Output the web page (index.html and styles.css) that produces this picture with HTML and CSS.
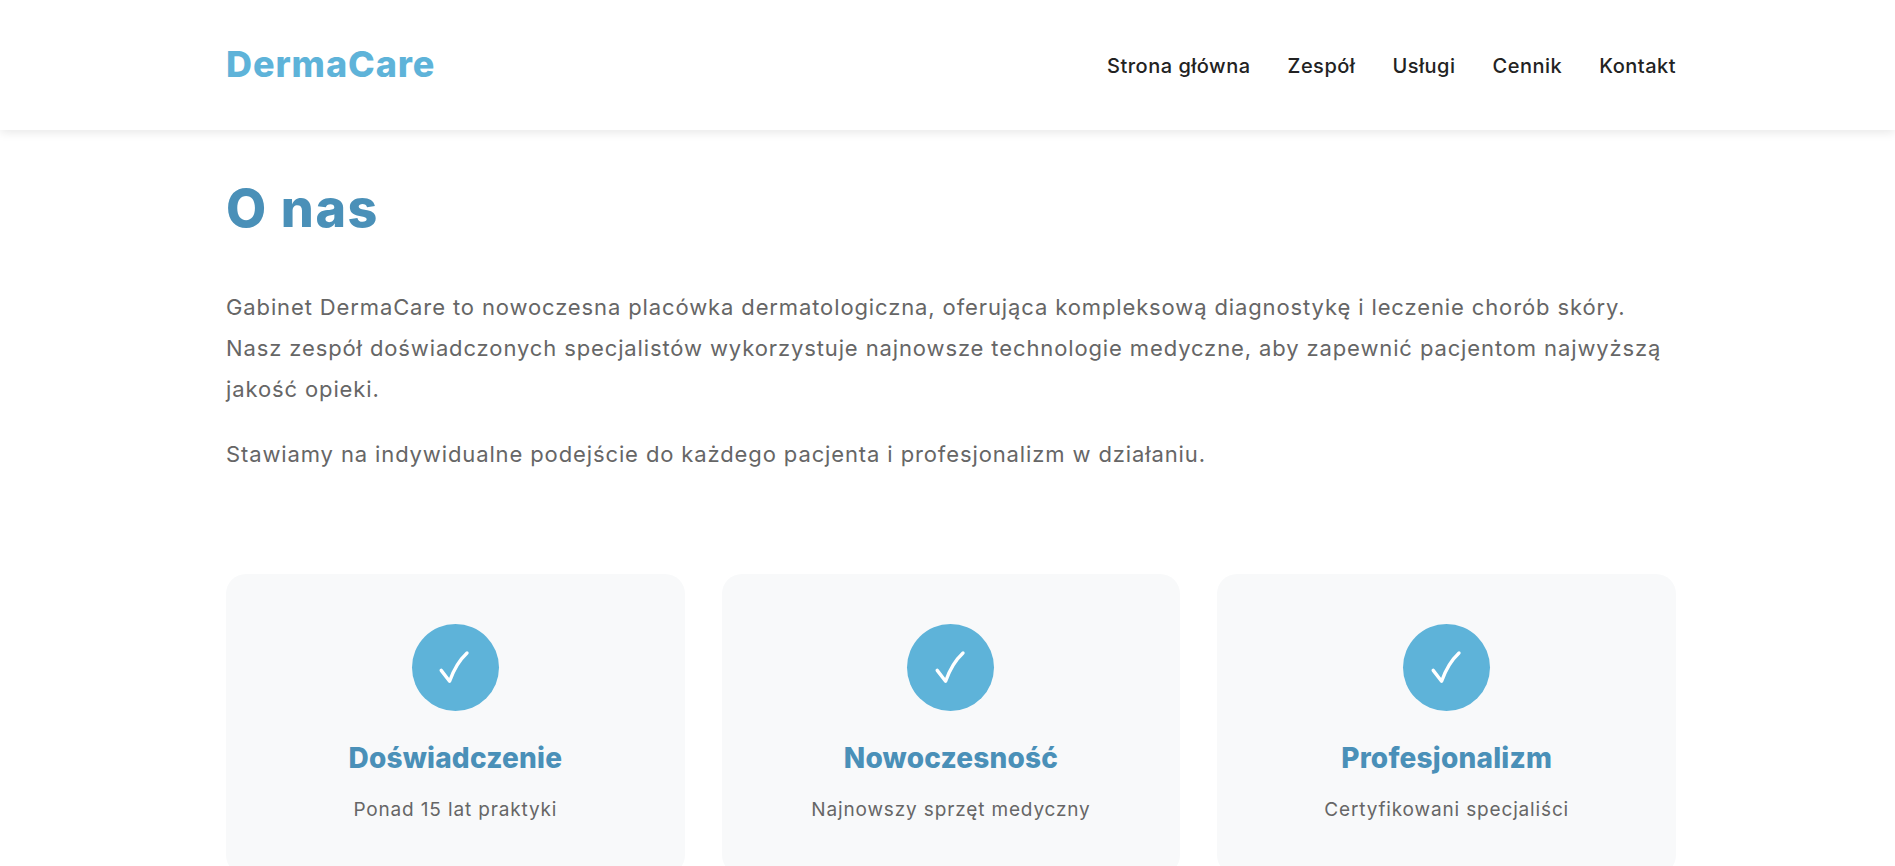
FILE: index.html
```html
<!DOCTYPE html>
<html lang="pl">
<head>
    <meta charset="UTF-8">
    <meta name="viewport" content="width=device-width, initial-scale=1.0">
    <title>DermaCare - O nas</title>
    <link rel="stylesheet" href="styles.css">
</head>
<body>
    <header class="site-header">
        <div class="container nav-row">
            <a href="#" class="logo">DermaCare</a>
            <nav class="main-nav">
                <a href="#">Strona główna</a>
                <a href="#">Zespół</a>
                <a href="#">Usługi</a>
                <a href="#">Cennik</a>
                <a href="#">Kontakt</a>
            </nav>
        </div>
    </header>

    <main class="container about">
        <h1>O nas</h1>
        <p class="lead">Gabinet DermaCare to nowoczesna placówka dermatologiczna, oferująca kompleksową diagnostykę i leczenie chorób skóry. Nasz zespół doświadczonych specjalistów wykorzystuje najnowsze technologie medyczne, aby zapewnić pacjentom najwyższą jakość opieki.</p>
        <p class="lead">Stawiamy na indywidualne podejście do każdego pacjenta i profesjonalizm w działaniu.</p>

        <div class="card-grid">
            <div class="card">
                <div class="card-icon">
                    <svg viewBox="0 0 40 40"><path d="M8.5 22 L15.5 31 C18.5 22.5 23 14 30 7.5"/></svg>
                </div>
                <h3>Doświadczenie</h3>
                <p>Ponad 15 lat praktyki</p>
            </div>
            <div class="card">
                <div class="card-icon">
                    <svg viewBox="0 0 40 40"><path d="M8.5 22 L15.5 31 C18.5 22.5 23 14 30 7.5"/></svg>
                </div>
                <h3>Nowoczesność</h3>
                <p>Najnowszy sprzęt medyczny</p>
            </div>
            <div class="card">
                <div class="card-icon">
                    <svg viewBox="0 0 40 40"><path d="M8.5 22 L15.5 31 C18.5 22.5 23 14 30 7.5"/></svg>
                </div>
                <h3>Profesjonalizm</h3>
                <p>Certyfikowani specjaliści</p>
            </div>
        </div>
    </main>
</body>
</html>
```

FILE: styles.css
```css
* {
    margin: 0;
    padding: 0;
    box-sizing: border-box;
}

body {
    font-family: 'Inter', 'Liberation Sans', sans-serif;
    line-height: 1.6;
    color: #666;
    background: #fff;
}

.container {
    width: 1450px;
    margin-left: 226px;
}

.site-header {
    height: 130px;
    background: #fff;
    box-shadow: 0 2px 10px rgba(0,0,0,0.1);
}

.nav-row {
    height: 100%;
    display: flex;
    justify-content: space-between;
    align-items: center;
}

.logo {
    font-size: 36px;
    font-weight: 800;
    letter-spacing: 0.9px;
    color: #5eb3d9;
    text-decoration: none;
}

.main-nav {
    display: flex;
    gap: 37px;
    padding-top: 1px;
}

.main-nav a {
    font-size: 20px;
    font-weight: 500;
    letter-spacing: 0.5px;
    color: #222;
    text-decoration: none;
}

.about {
    padding-top: 37px;
}

.about h1 {
    font-size: 52px;
    font-weight: 800;
    letter-spacing: 1.6px;
    line-height: 1.6;
    color: #4a90b8;
    margin-bottom: 37px;
}

.lead {
    font-size: 22px;
    letter-spacing: 0.88px;
    line-height: 41px;
    margin-bottom: 24px;
}

.card-grid {
    display: grid;
    grid-template-columns: repeat(3, 1fr);
    gap: 37px;
    margin-top: 99px;
}

.card {
    background: #f8f9fa;
    border-radius: 20px;
    padding: 50px 40px;
    text-align: center;
}

.card-icon {
    width: 87px;
    height: 87px;
    margin: 0 auto 25px;
    border-radius: 50%;
    background: #5eb3d9;
    display: flex;
    align-items: center;
    justify-content: center;
}

.card-icon svg {
    width: 48px;
    height: 48px;
}

.card-icon path {
    fill: none;
    stroke: #fff;
    stroke-width: 2.8;
    stroke-linecap: round;
    stroke-linejoin: round;
}

.card h3 {
    font-size: 28px;
    font-weight: 800;
    letter-spacing: 0.2px;
    color: #4a90b8;
    margin-bottom: 14px;
}

.card p {
    font-size: 19px;
    letter-spacing: 0.85px;
}
```
